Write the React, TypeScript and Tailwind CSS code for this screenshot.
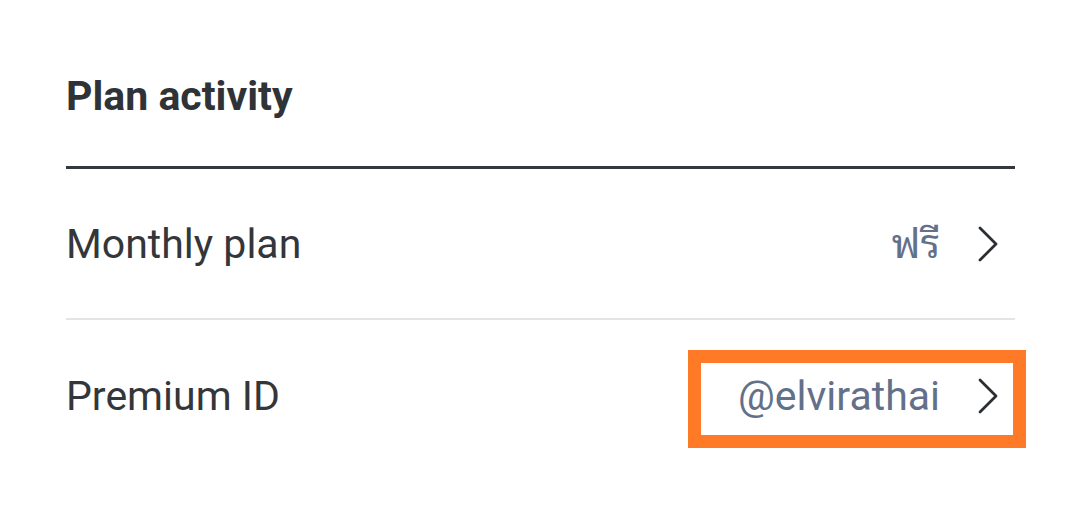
import React from "react";

const Chevron = () => (
  <svg width="22" height="38" viewBox="0 0 22 38" fill="none" className="shrink-0">
    <path d="M3 3 L19 19 L3 35" stroke="#2b2f33" strokeWidth="2.8" strokeLinecap="round" strokeLinejoin="round" />
  </svg>
);

export default function App() {
  return (
    <div className="w-[1080px] h-[531px] bg-white" style={{ fontFamily: "Roboto, 'Noto Sans', 'Noto Sans Thai Looped', 'Noto Sans Thai', sans-serif" }}>
      <div className="pl-[66px] pr-[65px] pt-[72px]">
        <h1 className="text-[41px] leading-[48px] font-bold text-[#2f3338]">Plan activity</h1>
        <div className="mt-[46px] h-[3px] bg-[#34373b]" />
        <div className="flex items-center justify-between h-[151px] border-b-2 border-[#e3e4e6]">
          <span className="text-[41px] leading-[48px] text-[#33363a]">Monthly plan</span>
          <div className="flex items-center gap-[37px] pr-[16px]">
            <span className="text-[41px] leading-[48px] text-[#63708a]">ฟรี</span>
            <Chevron />
          </div>
        </div>
        <div className="flex items-center justify-between h-[152px]">
          <span className="text-[41px] leading-[48px] text-[#33363a]">Premium ID</span>
          <div className="relative flex items-center gap-[37px] pr-[16px]">
            <span className="text-[41px] leading-[48px] text-[#63708a]">@elvirathai</span>
            <Chevron />
            <div className="absolute left-[-50px] right-[-11px] top-[-22px] bottom-[-28px] border-[13px] border-[#ff7a27]" />
          </div>
        </div>
      </div>
    </div>
  );
}
